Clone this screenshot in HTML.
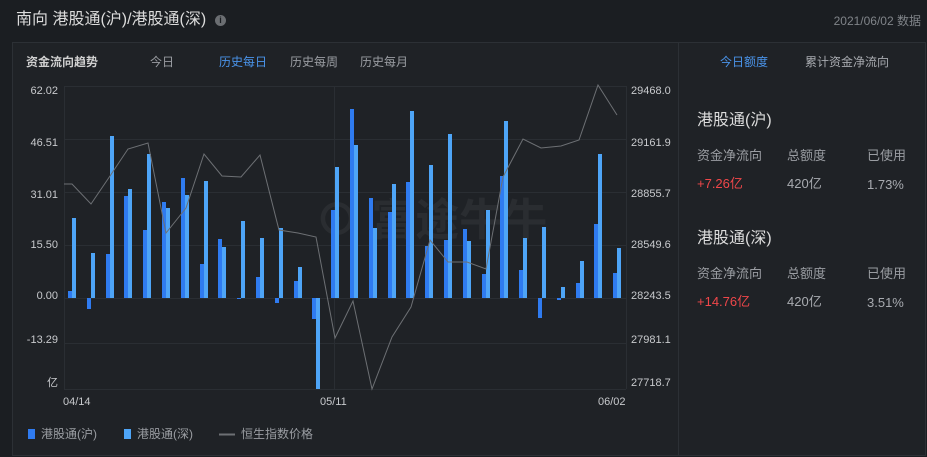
<!DOCTYPE html>
<html><head><meta charset="utf-8"><style>
body{margin:0;width:927px;height:457px;background:#1b1e22;font-family:"Liberation Sans","Noto Sans CJK SC",sans-serif;overflow:hidden;position:relative;color:#ccc}
.a{position:absolute;white-space:nowrap;line-height:1.2}
</style></head><body>
<div class="a" style="left:16px;top:10px;font-size:16px;color:#dcdcdc">南向 港股通(沪)/港股通(深)</div>
<div class="a" style="left:215px;top:15px;width:11px;height:11px;border-radius:50%;background:#6b6e72;color:#1b1e22;font-size:9px;font-weight:bold;text-align:center;line-height:11px">i</div>
<div class="a" style="right:6px;top:14px;font-size:12px;color:#808489">2021/06/02 数据</div>
<div class="a" style="left:12px;top:42px;width:914px;height:414px;background:#1f2226;border:1px solid #2c3035;box-sizing:border-box"></div>
<div class="a" style="left:678px;top:42px;width:1px;height:414px;background:#2c3035"></div>
<div class="a" style="left:26px;top:55px;font-size:12px;font-weight:bold;color:#d0d0d0">资金流向趋势</div>
<div class="a" style="left:150px;top:55px;font-size:12px;color:#9a9da2">今日</div>
<div class="a" style="left:219px;top:55px;font-size:12px;color:#4a94ea">历史每日</div>
<div class="a" style="left:290px;top:55px;font-size:12px;color:#9a9da2">历史每周</div>
<div class="a" style="left:360px;top:55px;font-size:12px;color:#9a9da2">历史每月</div>
<div class="a" style="left:720px;top:55px;font-size:12px;color:#4a94ea">今日额度</div>
<div class="a" style="left:805px;top:55px;font-size:12px;color:#a8abb0">累计资金净流向</div>
<div class="a" style="left:697px;top:111px;font-size:16px;color:#dcdcdc">港股通(沪)</div>
<div class="a" style="left:697px;top:148px;font-size:13px;color:#9a9da2">资金净流向</div>
<div class="a" style="left:787px;top:148px;font-size:13px;color:#9a9da2">总额度</div>
<div class="a" style="left:867px;top:148px;font-size:13px;color:#9a9da2">已使用</div>
<div class="a" style="left:697px;top:176px;font-size:13px;color:#f0474a">+7.26亿</div>
<div class="a" style="left:787px;top:176px;font-size:13px;color:#a8abb0">420亿</div>
<div class="a" style="left:867px;top:177px;font-size:13px;color:#a8abb0">1.73%</div>
<div class="a" style="left:697px;top:229px;font-size:16px;color:#dcdcdc">港股通(深)</div>
<div class="a" style="left:697px;top:266px;font-size:13px;color:#9a9da2">资金净流向</div>
<div class="a" style="left:787px;top:266px;font-size:13px;color:#9a9da2">总额度</div>
<div class="a" style="left:867px;top:266px;font-size:13px;color:#9a9da2">已使用</div>
<div class="a" style="left:697px;top:294px;font-size:13px;color:#f0474a">+14.76亿</div>
<div class="a" style="left:787px;top:294px;font-size:13px;color:#a8abb0">420亿</div>
<div class="a" style="left:867px;top:295px;font-size:13px;color:#a8abb0">3.51%</div>

<svg class="a" style="left:0;top:0" width="678" height="457" font-family="Liberation Sans, Noto Sans CJK SC, sans-serif">
<g stroke="#2a2e33" stroke-width="1">
<line x1="64" y1="86.5" x2="626" y2="86.5"/><line x1="64" y1="139.5" x2="626" y2="139.5"/><line x1="64" y1="192.5" x2="626" y2="192.5"/><line x1="64" y1="245.5" x2="626" y2="245.5"/><line x1="64" y1="298.5" x2="626" y2="298.5"/><line x1="64" y1="343.5" x2="626" y2="343.5"/><line x1="64" y1="389.5" x2="626" y2="389.5"/>
<line x1="64.5" y1="86" x2="64.5" y2="389"/><line x1="626.5" y1="86" x2="626.5" y2="389"/><line x1="334.5" y1="86" x2="334.5" y2="389"/>
</g>
<text x="315" y="235" font-size="44" fill="#ffffff" fill-opacity="0.05" font-weight="bold">⊙ 富途牛牛</text>
<g font-size="11" fill="#c8cacd" text-anchor="end">
<text x="58" y="94">62.02</text><text x="58" y="146">46.51</text><text x="58" y="198">31.01</text><text x="58" y="248">15.50</text><text x="58" y="299">0.00</text><text x="58" y="343">-13.29</text><text x="58" y="386">亿</text>
</g>
<g font-size="11" fill="#c8cacd">
<text x="631" y="94">29468.0</text><text x="631" y="146">29161.9</text><text x="631" y="197">28855.7</text><text x="631" y="248">28549.6</text><text x="631" y="299">28243.5</text><text x="631" y="343">27981.1</text><text x="631" y="386">27718.7</text>
<text x="63" y="405" fill="#c8cacd">04/14</text><text x="320" y="405">05/11</text><text x="598" y="405">06/02</text>
</g>
<g fill="#2f7bf0">
<rect x="68" y="291" width="4" height="7"/><rect x="87" y="298" width="4" height="11"/><rect x="106" y="254" width="4" height="44"/><rect x="124" y="196" width="4" height="102"/><rect x="143" y="230" width="4" height="68"/><rect x="162" y="202" width="4" height="96"/><rect x="181" y="178" width="4" height="120"/><rect x="200" y="264" width="4" height="34"/><rect x="218" y="239" width="4" height="59"/><rect x="237" y="298" width="4" height="1"/><rect x="256" y="277" width="4" height="21"/><rect x="275" y="298" width="4" height="5"/><rect x="294" y="281" width="4" height="17"/><rect x="312" y="298" width="4" height="21"/><rect x="331" y="210" width="4" height="88"/><rect x="350" y="109" width="4" height="189"/><rect x="369" y="198" width="4" height="100"/><rect x="388" y="212" width="4" height="86"/><rect x="406" y="182" width="4" height="116"/><rect x="425" y="246" width="4" height="52"/><rect x="444" y="240" width="4" height="58"/><rect x="463" y="229" width="4" height="69"/><rect x="482" y="274" width="4" height="24"/><rect x="500" y="176" width="4" height="122"/><rect x="519" y="270" width="4" height="28"/><rect x="538" y="298" width="4" height="20"/><rect x="557" y="298" width="4" height="2"/><rect x="576" y="283" width="4" height="15"/><rect x="594" y="224" width="4" height="74"/><rect x="613" y="273" width="4" height="25"/>
</g>
<g fill="#4ea5f7">
<rect x="72" y="218" width="4" height="80"/><rect x="91" y="253" width="4" height="45"/><rect x="110" y="136" width="4" height="162"/><rect x="128" y="189" width="4" height="109"/><rect x="147" y="154" width="4" height="144"/><rect x="166" y="208" width="4" height="90"/><rect x="185" y="195" width="4" height="103"/><rect x="204" y="181" width="4" height="117"/><rect x="222" y="247" width="4" height="51"/><rect x="241" y="221" width="4" height="77"/><rect x="260" y="238" width="4" height="60"/><rect x="279" y="228" width="4" height="70"/><rect x="298" y="267" width="4" height="31"/><rect x="316" y="298" width="4" height="91"/><rect x="335" y="167" width="4" height="131"/><rect x="354" y="145" width="4" height="153"/><rect x="373" y="228" width="4" height="70"/><rect x="392" y="184" width="4" height="114"/><rect x="410" y="111" width="4" height="187"/><rect x="429" y="165" width="4" height="133"/><rect x="448" y="134" width="4" height="164"/><rect x="467" y="241" width="4" height="57"/><rect x="486" y="210" width="4" height="88"/><rect x="504" y="121" width="4" height="177"/><rect x="523" y="238" width="4" height="60"/><rect x="542" y="227" width="4" height="71"/><rect x="561" y="287" width="4" height="11"/><rect x="580" y="261" width="4" height="37"/><rect x="598" y="154" width="4" height="144"/><rect x="617" y="248" width="4" height="50"/>
</g>
<polyline fill="none" stroke="#6d7074" stroke-width="1" points="64,184 72,184 91,204 110,176 128,149 148,143 166,233 186,208 204,154 222,176 241,177 260,155 279,230 298,233 316,237 335,338 353,301 372,389 392,337 411,307 430,240 448,262 467,262 486,269 503,177 523,139 541,148 561,146 579,140 598,85 617,115"/>
<rect x="28" y="429" width="7" height="10" fill="#2f7bf0"/><text x="41" y="438" font-size="12" fill="#9a9da2">港股通(沪)</text>
<rect x="124" y="429" width="7" height="10" fill="#4ea5f7"/><text x="137" y="438" font-size="12" fill="#9a9da2">港股通(深)</text>
<line x1="219" y1="434.5" x2="235" y2="434.5" stroke="#6d7074" stroke-width="2"/><text x="241" y="438" font-size="12" fill="#9a9da2">恒生指数价格</text>
</svg>
</body></html>
